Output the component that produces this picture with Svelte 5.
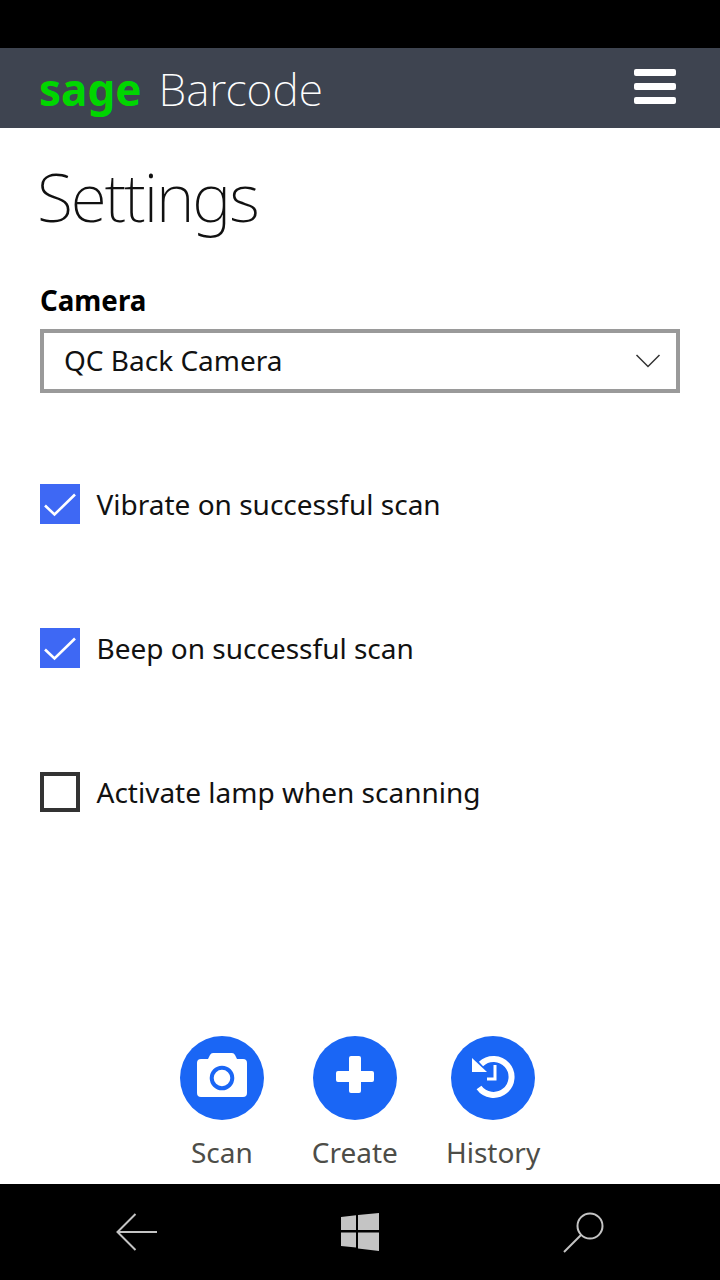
<script>
  let options = [
    { label: "Vibrate on successful scan", checked: true },
    { label: "Beep on successful scan", checked: true },
    { label: "Activate lamp when scanning", checked: false }
  ];
</script>

<div class="page">
  <div class="status"></div>

  <header>
    <div class="brand">
      <span class="sage">sage</span>
      <span class="name">Barcode</span>
    </div>
    <div class="burger"><i></i><i></i><i></i></div>
  </header>

  <main>
    <h1>Settings</h1>

    <div class="field-label">Camera</div>
    <div class="select">
      <span>QC Back Camera</span>
      <svg width="26" height="16" viewBox="0 0 26 16">
        <path d="M1.5 2 L13 13.5 L24.5 2" fill="none" stroke="#333" stroke-width="1.5" />
      </svg>
    </div>

    <div class="options">
      {#each options as opt}
        <div class="option">
          {#if opt.checked}
            <div class="box on">
              <svg width="40" height="40" viewBox="0 0 40 40">
                <path d="M5 21.5 L14.5 30.5 L35 10.5" fill="none" stroke="#fff" stroke-width="2.6" />
              </svg>
            </div>
          {:else}
            <div class="box"></div>
          {/if}
          <span>{opt.label}</span>
        </div>
      {/each}
    </div>
  </main>

  <div class="actions">
    <div class="action">
      <div class="circle">
        <svg width="84" height="84" viewBox="0 0 84 84">
          <path fill="#fff" d="M21 23 H28 L30 19 Q31 17 33 17 H52 Q54 17 55 19 L57 23 H63 Q67 23 67 27 V57 Q67 61 63 61 H21 Q17 61 17 57 V27 Q17 23 21 23 Z" />
          <circle cx="42" cy="42" r="10.3" fill="none" stroke="#1a66f5" stroke-width="4" />
        </svg>
      </div>
      <span>Scan</span>
    </div>
    <div class="action">
      <div class="circle">
        <svg width="84" height="84" viewBox="0 0 84 84">
          <path fill="#fff" d="M38 20 H46 Q48 20 48 22 V35 H59 Q61 35 61 37 V44 Q61 46 59 46 H48 V55 Q48 57 46 57 H38 Q36 57 36 55 V46 H25 Q23 46 23 44 V37 Q23 35 25 35 H36 V22 Q36 20 38 20 Z" />
        </svg>
      </div>
      <span>Create</span>
    </div>
    <div class="action">
      <div class="circle">
        <svg width="84" height="84" viewBox="0 0 84 84">
          <path fill="none" stroke="#fff" stroke-width="6" d="M30 28 A18 18 0 1 1 28 51.5" />
          <path fill="#fff" d="M21 22 V36 H36 Z" />
          <path fill="none" stroke="#fff" stroke-width="3" d="M44 29 V43 H36" />
        </svg>
      </div>
      <span>History</span>
    </div>
  </div>

  <nav>
    <svg width="44" height="38" viewBox="0 0 44 38">
      <path d="M19.5 1 L1.5 19 L19.5 37 M1.5 19 H41" fill="none" stroke="#c4c4c4" stroke-width="2" />
    </svg>
    <svg class="win" width="38" height="38" viewBox="0 0 38 38">
      <path fill="#c4c4c4" d="M0 4 L15 2.2 V17 H0 Z M17 2 L38 0 V17 H17 Z M0 19.5 H15 V34.5 L0 33 Z M17 19.5 H38 V38 L17 35.5 Z" />
    </svg>
    <svg width="42" height="42" viewBox="0 0 42 42">
      <circle cx="27" cy="15" r="12.5" fill="none" stroke="#c4c4c4" stroke-width="2" />
      <path d="M18 24 L1 41" fill="none" stroke="#c4c4c4" stroke-width="2" />
    </svg>
  </nav>
</div>

<style>
  :global(body) {
    margin: 0;
    background: #fff;
  }

  .page {
    width: 720px;
    height: 1280px;
    display: flex;
    flex-direction: column;
    overflow: hidden;
    font-family: "Noto Sans", "Open Sans", sans-serif;
    color: #111;
  }

  .status {
    height: 48px;
    background: #000;
  }

  header {
    height: 80px;
    background: #3e4450;
    display: flex;
    align-items: center;
    justify-content: space-between;
    padding: 0 44px 0 39px;
  }

  .brand {
    display: flex;
    align-items: baseline;
    gap: 17px;
    margin-top: 2px;
  }

  .sage {
    font-weight: 700;
    font-size: 44px;
    line-height: 60px;
    color: #00d600;
  }

  .name {
    font-weight: 200;
    font-size: 44.5px;
    line-height: 60px;
    color: #fff;
  }

  .burger {
    display: flex;
    flex-direction: column;
    gap: 7px;
    margin-top: -4px;
  }

  .burger i {
    display: block;
    width: 42px;
    height: 7px;
    border-radius: 2px;
    background: #fff;
  }

  main {
    flex: 1;
    padding: 0 40px;
  }

  h1 {
    margin: 22px 0 0 -3px;
    font-weight: 200;
    font-size: 66px;
    line-height: 92px;
    letter-spacing: -2.1px;
    color: #111;
  }

  .field-label {
    margin-top: 40px;
    font-weight: 700;
    font-size: 27.7px;
    line-height: 37px;
    color: #000;
  }

  .select {
    margin-top: 10px;
    height: 64px;
    box-sizing: border-box;
    border: 4px solid #9a9a9a;
    display: flex;
    align-items: center;
    justify-content: space-between;
    padding: 0 18px 2px 20px;
    font-size: 28px;
    color: #111;
  }

  .select svg {
    margin: 2px -3px 0 0;
  }

  .options {
    margin-top: 91px;
    display: flex;
    flex-direction: column;
    gap: 104px;
  }

  .option {
    display: flex;
    align-items: center;
    gap: 16.5px;
    height: 40px;
    font-size: 28px;
    color: #111;
  }

  .box {
    width: 40px;
    height: 40px;
    box-sizing: border-box;
    border: 4px solid #333;
  }

  .box.on {
    border: 0;
    background: #3e68f4;
  }

  .box svg {
    display: block;
  }

  .actions {
    height: 148px;
    display: flex;
    align-items: flex-start;
    justify-content: center;
    gap: 48px;
  }

  .action {
    display: flex;
    flex-direction: column;
    align-items: center;
    font-size: 28px;
    color: #4d4d48;
  }

  .action span {
    margin-top: 12px;
    line-height: 40px;
  }

  .circle {
    width: 84px;
    height: 84px;
    border-radius: 50%;
    background: #1a66f5;
  }

  .circle svg {
    display: block;
  }

  nav {
    height: 96px;
    background: #000;
    display: flex;
    align-items: center;
    justify-content: space-between;
    padding: 0 115px 0 116px;
  }

  .win {
    margin-left: -3px;
  }
</style>
